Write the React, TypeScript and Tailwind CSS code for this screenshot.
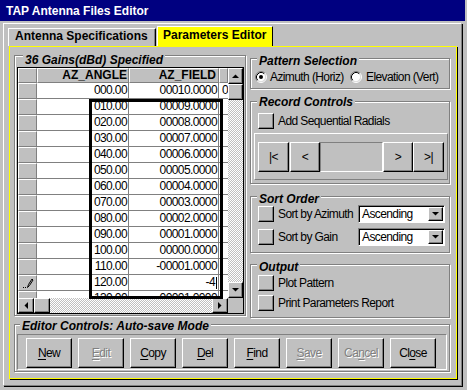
import React from "react";

const N = "font-['Liberation_Sans',Arial,sans-serif] tracking-[-0.6px]";
const S = "font-['Liberation_Sans',Arial,sans-serif] tracking-normal";

const raised =
  "border border-t-white border-l-white border-r-black border-b-black shadow-[inset_-1px_-1px_0_#808080]";
const raisedThin =
  "border border-t-white border-l-white border-r-[#808080] border-b-[#808080]";
const etched = "border border-[#808080] shadow-[inset_1px_1px_0_#fff,1px_1px_0_#fff]";
const sunken =
  "border border-t-[#808080] border-l-[#808080] border-r-white border-b-white shadow-[inset_1px_1px_0_#000]";
const dither =
  "bg-[repeating-conic-gradient(#c0c0c0_0%_25%,#ffffff_0%_50%)] bg-[length:2px_2px]";

function Group({
  title,
  className,
  titleCls,
  children,
}: {
  title: string;
  className: string;
  titleCls: string;
  children?: React.ReactNode;
}) {
  return (
    <div className={`relative ${etched} ${className}`}>
      <div
        className={`absolute ${titleCls} px-[2px] bg-[#c0c0c0] ${S} font-bold italic text-[12px] leading-[13px] text-black whitespace-nowrap`}
      >
        {title}
      </div>
      {children}
    </div>
  );
}

function Arrow({ dir }: { dir: "up" | "down" | "left" | "right" }) {
  const pts =
    dir === "up"
      ? "0,4 7,4 3.5,0.5"
      : dir === "down"
      ? "0,0 7,0 3.5,3.5"
      : dir === "left"
      ? "4,0 4,7 0.5,3.5"
      : "0,0 0,7 3.5,3.5";
  const w = dir === "up" || dir === "down" ? 7 : 4;
  const h = dir === "up" || dir === "down" ? 4 : 7;
  return (
    <svg width={w} height={h} viewBox={`0 0 ${w} ${h}`}>
      <polygon points={pts} fill="#000" />
    </svg>
  );
}

function ScrollBtn({ dir, className }: { dir: "up" | "down" | "left" | "right"; className: string }) {
  return (
    <div className={`${className} bg-[#c0c0c0] ${raised} flex items-center justify-center shrink-0`}>
      <Arrow dir={dir} />
    </div>
  );
}

function Radio({ checked }: { checked: boolean }) {
  return (
    <svg width="12" height="12" viewBox="0 0 12 12" className="shrink-0">
      <circle cx="6" cy="6" r="4.5" fill="#fff" />
      <path d="M2.11 9.89 A5.5 5.5 0 0 1 9.89 2.11" stroke="#808080" fill="none" />
      <path d="M9.89 2.11 A5.5 5.5 0 0 1 2.11 9.89" stroke="#fff" fill="none" />
      <path d="M2.82 9.18 A4.5 4.5 0 0 1 9.18 2.82" stroke="#000" fill="none" />
      <path d="M9.18 2.82 A4.5 4.5 0 0 1 2.82 9.18" stroke="#dfdfdf" fill="none" />
      {checked && <circle cx="6" cy="6" r="2" fill="#000" />}
    </svg>
  );
}

function Square() {
  return <div className={`w-[16px] h-[16px] bg-[#c0c0c0] ${raised} shrink-0`} />;
}

function Dropdown() {
  return (
    <div className={`w-[87px] h-[18px] bg-white ${sunken} flex items-center justify-between pl-[3px] pr-[1px]`}>
      <span className="leading-[14px]">Ascending</span>
      <div className={`w-[15px] h-[14px] bg-[#c0c0c0] ${raised} flex items-center justify-center`}>
        <Arrow dir="down" />
      </div>
    </div>
  );
}

const rows: [string, string][] = [
  ["000.00", "00010.0000"],
  ["010.00", "00009.0000"],
  ["020.00", "00008.0000"],
  ["030.00", "00007.0000"],
  ["040.00", "00006.0000"],
  ["050.00", "00005.0000"],
  ["060.00", "00004.0000"],
  ["070.00", "00003.0000"],
  ["080.00", "00002.0000"],
  ["090.00", "00001.0000"],
  ["100.00", "00000.0000"],
  ["110.00", "-00001.0000"],
  ["120.00", "-4"],
  ["130.00", "-00001.0000"],
];

function Pencil() {
  return (
    <svg width="12" height="11" viewBox="0 0 12 11">
      <rect x="1" y="9" width="1" height="1" fill="#000" />
      <rect x="3" y="9" width="1" height="1" fill="#000" />
      <path d="M5.5 9.5 L6.5 6.5 L10 1 L11 2 L7.5 7.5 Z" stroke="#000" strokeWidth="1" fill="none" />
    </svg>
  );
}

function Grid() {
  return (
    <div className="relative w-[227px] h-[247px] border border-black bg-white flex flex-col">
      <div className="flex h-[230px]">
        <div className="w-[210px] h-[230px] overflow-hidden flex flex-col bg-white">
          <div className={`flex h-[15px] shrink-0 ${S} font-bold text-[12px] leading-[13px]`}>
            <div className={`w-[19px] h-[15px] bg-[#c0c0c0] ${raisedThin} shrink-0`} />
            <div className={`w-[92px] h-[15px] bg-[#c0c0c0] ${raisedThin} text-right pr-[1px] shrink-0`}>
              AZ_ANGLE
            </div>
            <div className={`w-[90px] h-[15px] bg-[#c0c0c0] ${raisedThin} text-right pr-[2px] shrink-0`}>
              AZ_FIELD
            </div>
            <div className={`w-[9px] h-[15px] bg-[#c0c0c0] ${raisedThin} shrink-0`} />
          </div>
          {rows.map(([a, f], i) => (
            <div key={a} className="flex h-[16px] shrink-0">
              <div
                className={`w-[19px] h-[16px] bg-[#c0c0c0] ${raisedThin} shrink-0 flex items-end pb-[1px] pl-[3px]`}
              >
                {i === 12 && <Pencil />}
              </div>
              <div className="flex h-[16px] border-b border-[#808080] leading-[15px]">
                <div className="w-[92px] border-r border-[#808080] text-right pr-[1px] shrink-0">{a}</div>
                <div className="w-[90px] border-r border-[#808080] text-right pr-[1px] shrink-0 flex justify-end items-center">
                  {i === 12 ? (
                    <>
                      <span>-4</span>
                      <span className="inline-block w-[1px] h-[12px] bg-black ml-[1px]" />
                    </>
                  ) : (
                    <span>{f}</span>
                  )}
                </div>
                <div className="w-[9px] pl-[3px] overflow-hidden shrink-0">{i === 0 ? "0" : ""}</div>
              </div>
            </div>
          ))}
        </div>
        <div className="w-[15px] h-[230px] flex flex-col">
          <ScrollBtn dir="up" className="w-[15px] h-[16px]" />
          <div className={`w-[15px] h-[16px] bg-[#c0c0c0] ${raised} shrink-0`} />
          <div className={`flex-1 ${dither}`} />
          <ScrollBtn dir="down" className="w-[15px] h-[16px]" />
        </div>
      </div>
      <div className="flex h-[15px]">
        <div className="w-[210px] h-[15px] flex">
          <ScrollBtn dir="left" className="w-[16px] h-[15px]" />
          <div className={`w-[16px] h-[15px] bg-[#c0c0c0] ${raised} shrink-0`} />
          <div className={`flex-1 ${dither}`} />
          <ScrollBtn dir="right" className="w-[16px] h-[15px]" />
        </div>
        <div className="w-[15px] h-[15px] bg-[#c0c0c0]" />
      </div>
      <div className="absolute left-[71px] top-[31px] w-[134px] h-[200px] border-[3px] border-black pointer-events-none" />
    </div>
  );
}

function NavBtn({ label, w }: { label: string; w: string }) {
  return (
    <div className={`${w} h-[30px] bg-[#c0c0c0] ${raised} flex items-center justify-center shrink-0`}>
      {label}
    </div>
  );
}

function Btn({ pre, u, post, disabled }: { pre: string; u: string; post: string; disabled?: boolean }) {
  return (
    <div
      className={`w-[46px] h-[30px] bg-[#c0c0c0] ${raised} flex items-center justify-center leading-[16px] shrink-0 ${
        disabled ? "text-[#808080] [text-shadow:1px_1px_0_#fff]" : "text-black"
      }`}
    >
      <span>
        {pre}
        <span className="underline decoration-1 underline-offset-[2px]">{u}</span>
        {post}
      </span>
    </div>
  );
}

export default function App() {
  return (
    <div className={`w-[467px] h-[390px] bg-[#c0c0c0] overflow-hidden ${N} text-[12px] text-black`}>
      <div
        className={`h-[21px] w-[465px] bg-[#000080] text-white ${S} font-bold text-[12px] leading-[19px] pt-[2px] pl-[6px]`}
      >
        TAP Antenna Files Editor
      </div>
      <div className="mt-[2px] ml-[3px] w-[459px] h-[363px] border border-t-white border-l-white border-r-[#808080] border-b-[#808080] shadow-[1px_1px_0_#000]">
        <div className={`h-[22px] flex items-end ${S} font-bold text-[12px] leading-[13px]`}>
          <div className="ml-[4px] w-[148px] h-[18px] bg-[#c0c0c0] border-t border-l border-white border-r border-r-black shadow-[inset_-1px_0_0_#808080] pl-[6px] pt-[1px]">
            Antenna Specifications
          </div>
          <div className="ml-[1px] w-[116px] h-[20px] bg-[#ffff00] border-t border-l border-white border-r border-r-black pl-[5px] pt-[2px]">
            Parameters Editor
          </div>
        </div>
        <div className="ml-[5px] w-[448px] h-[333px] border border-[#ffff00] shadow-[1px_1px_0_#000] flex flex-col">
          <div className="flex mt-[8px] ml-[4px]">
            <Group
              title="36 Gains(dBd) Specified"
              titleCls="left-[8px] top-[-2px]"
              className="w-[232px] h-[261px] pt-[11px] pl-[2px]"
            >
              <Grid />
            </Group>
            <div className="ml-[4px] w-[200px] flex flex-col">
              <Group title="Pattern Selection" titleCls="left-[6px] top-[-4px]" className="mt-[3px] h-[31px]">
                <div className="mt-[12px] ml-[4px] h-[12px] flex items-center">
                  <Radio checked />
                  <span className="ml-[3px] w-[80px] leading-[12px] whitespace-nowrap">Azimuth (Horiz)</span>
                  <Radio checked={false} />
                  <span className="ml-[4px] leading-[12px] whitespace-nowrap">Elevation (Vert)</span>
                </div>
              </Group>
              <Group title="Record Controls" titleCls="left-[6px] top-[-6px]" className="mt-[12px] h-[83px]">
                <div className="mt-[11px] ml-[7px] h-[16px] flex items-center">
                  <Square />
                  <span className="ml-[4px] whitespace-nowrap">Add Sequential Radials</span>
                </div>
                <div className="mt-[4px] ml-[3px] w-[194px] h-[47px] border border-t-white border-l-white border-r-[#808080] border-b-[#808080] pt-[8px] pl-[3px] flex">
                  <NavBtn label="|<" w="w-[31px]" />
                  <div className="w-[1px]" />
                  <NavBtn label="<" w="w-[30px]" />
                  <div className="w-[63px] h-[30px] border-t border-l border-[#808080] border-b border-b-white border-r border-r-white" />
                  <NavBtn label=">" w="w-[30px]" />
                  <NavBtn label=">|" w="w-[31px]" />
                </div>
              </Group>
              <Group title="Sort Order" titleCls="left-[6px] top-[-4px]" className="mt-[12px] h-[57px]">
                <div className="mt-[8px] ml-[7px] h-[18px] flex items-center">
                  <Square />
                  <span className="ml-[4px] w-[80px] whitespace-nowrap">Sort by Azimuth</span>
                  <Dropdown />
                </div>
                <div className="mt-[5px] ml-[7px] h-[18px] flex items-center">
                  <Square />
                  <span className="ml-[4px] w-[80px] whitespace-nowrap">Sort by Gain</span>
                  <Dropdown />
                </div>
              </Group>
              <Group title="Output" titleCls="left-[6px] top-[-4px]" className="mt-[11px] h-[54px]">
                <div className="mt-[10px] ml-[7px] h-[16px] flex items-center">
                  <Square />
                  <span className="ml-[4px] whitespace-nowrap">Plot Pattern</span>
                </div>
                <div className="mt-[4px] ml-[7px] h-[16px] flex items-center">
                  <Square />
                  <span className="ml-[4px] whitespace-nowrap">Print Parameters Report</span>
                </div>
              </Group>
            </div>
          </div>
          <Group
            title="Editor Controls: Auto-save Mode"
            titleCls="left-[5px] top-[-5px]"
            className="mt-[6px] ml-[4px] w-[436px] h-[48px]"
          >
            <div className="mt-[9px] ml-[2px] w-[430px] h-[36px] border border-t-[#808080] border-l-[#808080] border-r-white border-b-white pt-[3px] pl-[8px] flex gap-[6px]">
              <Btn pre="" u="N" post="ew" />
              <Btn pre="" u="E" post="dit" disabled />
              <Btn pre="" u="C" post="opy" />
              <Btn pre="" u="D" post="el" />
              <Btn pre="" u="F" post="ind" />
              <Btn pre="" u="S" post="ave" disabled />
              <Btn pre="Ca" u="n" post="cel" disabled />
              <Btn pre="Cl" u="o" post="se" />
            </div>
          </Group>
        </div>
      </div>
    </div>
  );
}
